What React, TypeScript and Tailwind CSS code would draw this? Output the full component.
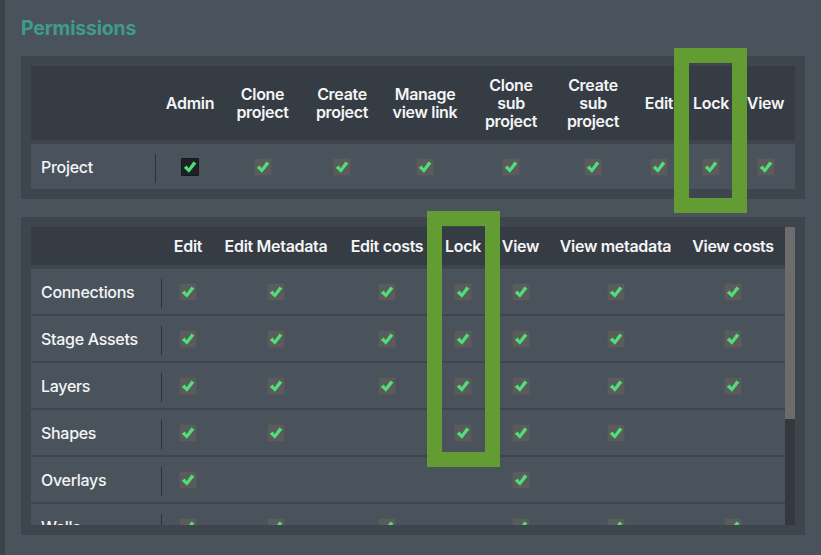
import React from "react";

function Check() {
  return (
    <svg width="14" height="14" viewBox="0 0 16 16" className="block">
      <polygon points="0.8,8.8 4.4,6.3 6.4,9.3 11.9,1.8 15.3,4.1 6.8,14.6" fill="#50de78" />
    </svg>
  );
}

function Box({ dark = false }: { dark?: boolean }) {
  return (
    <div
      className={
        dark
          ? "w-[18px] h-[18px] flex items-center justify-center bg-[#1e2124] border border-[#15171a] rounded-[1px]"
          : "w-[18px] h-[18px] flex items-center justify-center bg-[#5a5b5c] border border-[#535456] rounded-[1px]"
      }
    >
      <Check />
    </div>
  );
}

const P1_HEAD: string[][] = [
  ["Admin"],
  ["Clone", "project"],
  ["Create", "project"],
  ["Manage", "view link"],
  ["Clone", "sub", "project"],
  ["Create", "sub", "project"],
  ["Edit"],
  ["Lock"],
  ["View"],
];

const P2_HEAD = ["Edit", "Edit Metadata", "Edit costs", "Lock", "View", "View metadata", "View costs"];

const P2_ROWS: { name: string; v: boolean[] }[] = [
  { name: "Connections", v: [true, true, true, true, true, true, true] },
  { name: "Stage Assets", v: [true, true, true, true, true, true, true] },
  { name: "Layers", v: [true, true, true, true, true, true, true] },
  { name: "Shapes", v: [true, true, false, true, true, true, false] },
  { name: "Overlays", v: [true, false, false, false, true, false, false] },
  { name: "Walls", v: [true, true, true, false, true, true, true] },
];

export default function App() {
  return (
    <div className="relative w-[821px] h-[555px] overflow-hidden bg-[#4a535c] flex font-['Inter',sans-serif] text-[#f4f5f6]">
      <div className="w-[5px] shrink-0 bg-[#3b4249]" />
      <div className="flex-1 px-4">
        <h1 className="pt-[16px] mb-[16px] text-[19.5px] leading-[24px] font-bold text-[#3e9c89] tracking-[-0.2px]">
          Permissions
        </h1>

        {/* Panel 1 */}
        <div className="bg-[#3e454d] p-[10px]">
          <div className="grid grid-cols-[126px_66px_79px_80px_86px_86px_78px_54px_50px_59px] h-[74px] bg-[#363c43] items-center">
            <div />
            {P1_HEAD.map((lines, i) => (
              <div key={i} className="text-center text-[16px] leading-[18px] font-semibold tracking-[-0.3px]">
                {lines.map((l, j) => (
                  <div key={j} className="whitespace-nowrap">{l}</div>
                ))}
              </div>
            ))}
          </div>
          <div className="mt-[4px] grid grid-cols-[126px_66px_79px_80px_86px_86px_78px_54px_50px_59px] h-[45px] bg-[#4a535c] items-center">
            <div className="flex items-center justify-between h-full pl-[10px]">
              <span className="text-[16px] font-medium tracking-[-0.3px]">Project</span>
              <div className="w-px h-[29px] mt-[4px] mr-[1px] bg-[#2c3238]" />
            </div>
            {P1_HEAD.map((_, i) => (
              <div key={i} className="flex justify-center">
                <Box dark={i === 0} />
              </div>
            ))}
          </div>
        </div>

        {/* Panel 2 */}
        <div className="mt-[18px] bg-[#3e454d] p-[10px]">
          <div className="flex h-[298px]">
            <div className="w-[754px] overflow-hidden">
              <div className="grid grid-cols-[132px_50px_126px_96px_56px_59px_131px_104px] h-[38px] bg-[#363c43] items-center">
                <div />
                {P2_HEAD.map((h) => (
                  <div key={h} className="text-center whitespace-nowrap text-[16px] font-semibold tracking-[-0.3px]">
                    {h}
                  </div>
                ))}
              </div>
              <div className="mt-[4px] flex flex-col gap-[2px]">
                {P2_ROWS.map((r) => (
                  <div
                    key={r.name}
                    className="grid grid-cols-[132px_50px_126px_96px_56px_59px_131px_104px] h-[45px] shrink-0 bg-[#4a535c] items-center"
                  >
                    <div className="flex items-center justify-between h-full pl-[10px]">
                      <span className="text-[16px] font-medium tracking-[-0.3px]">{r.name}</span>
                      <div className="w-px h-[29px] mt-[4px] mr-[1px] bg-[#2c3238]" />
                    </div>
                    {r.v.map((c, i) => (
                      <div key={i} className="flex justify-center">
                        {c ? <Box /> : null}
                      </div>
                    ))}
                  </div>
                ))}
              </div>
            </div>
            <div className="w-[10px] bg-[#33393f]">
              <div className="h-[192px] bg-[#6c6c6c]" />
            </div>
          </div>
        </div>
      </div>

      {/* Highlight overlays */}
      <div className="absolute left-[674px] top-[48px] w-[73px] h-[165px] border-[15px] border-[#629c33]" />
      <div className="absolute left-[427px] top-[211px] w-[73px] h-[256px] border-[15px] border-[#629c33]" />
    </div>
  );
}
